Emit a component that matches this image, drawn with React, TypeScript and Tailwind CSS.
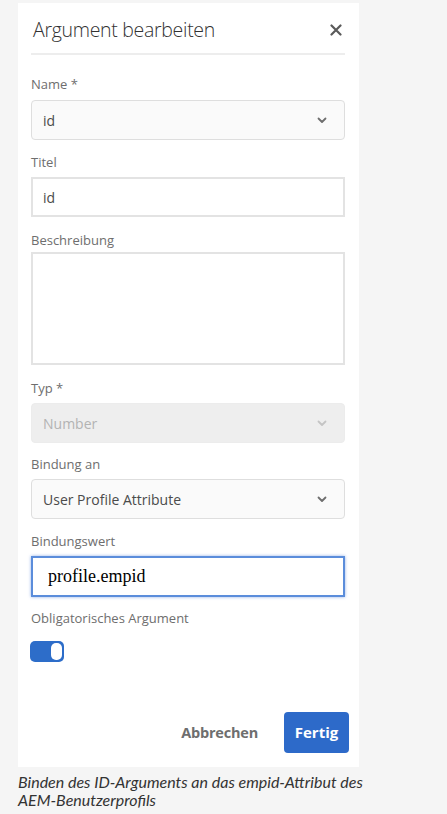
import React from "react";

const Chevron = ({ color = "#6e6e6e" }: { color?: string }) => (
  <svg width="10" height="7" viewBox="0 0 10 7" fill="none">
    <path d="M1.5 1.5 L5 5 L8.5 1.5" stroke={color} strokeWidth="1.8" strokeLinecap="round" strokeLinejoin="round" />
  </svg>
);

const Label = ({ children, className = "" }: { children: React.ReactNode; className?: string }) => (
  <div className={"h-[16px] text-[13px] leading-[16px] text-[#6e6e6e] " + className}>{children}</div>
);

const Select = ({ value, disabled = false, className = "" }: { value: string; disabled?: boolean; className?: string }) => (
  <div
    className={
      "flex h-[40px] w-[314px] items-center justify-between rounded-[4px] border-[1.5px] pl-[11px] pr-[17px] text-[14px] " +
      (disabled
        ? "border-[#ececec] bg-[#eeeeee] text-[#b3b3b3] "
        : "border-[#dedede] bg-[#fafafa] text-[#4b4b4b] ") +
      className
    }
  >
    <span>{value}</span>
    <Chevron color={disabled ? "#c4c4c4" : "#6e6e6e"} />
  </div>
);

export default function App() {
  return (
    <div className="min-h-[814px] w-[447px] bg-[#f5f5f5] pl-[18px] pt-[3px]" style={{ fontFamily: "'Open Sans', 'Noto Sans', sans-serif" }}>
      <div className="h-[764px] w-[341px] bg-white pl-[13px]">
        <div className="flex h-[50px] w-[314px] items-end justify-between pb-[10px] pl-[2px]">
          <div className="text-[19.5px] font-light leading-[26px] tracking-[-0.3px] text-[#323232]">Argument bearbeiten</div>
          <svg width="12" height="12" viewBox="0 0 12 12" className="mb-[7px] mr-[3px]">
            <path d="M1.5 1.5 L10.5 10.5 M10.5 1.5 L1.5 10.5" stroke="#5a5a5a" strokeWidth="2.2" strokeLinecap="round" />
          </svg>
        </div>
        <div className="h-[2px] w-[314px] bg-[#ededed]" />

        <Label className="mt-[21px]">Name *</Label>
        <Select value="id" className="mt-[8px]" />

        <Label className="mt-[14px]">Titel</Label>
        <div className="mt-[7px] flex h-[40px] w-[314px] items-center border-2 border-[#e3e3e3] bg-white pl-[10px] text-[14px] text-[#4b4b4b]">id</div>

        <Label className="mt-[15px]">Beschreibung</Label>
        <div className="mt-[4px] h-[113px] w-[314px] border-2 border-[#e3e3e3] bg-white" />

        <Label className="mt-[15px]">Typ *</Label>
        <Select value="Number" disabled className="mt-[7px]" />

        <Label className="mt-[13px]">Bindung an</Label>
        <Select value="User Profile Attribute" className="mt-[7px]" />

        <Label className="mt-[14px]">Bindungswert</Label>
        <div
          className="mt-[7px] flex h-[41px] w-[314px] items-center border-2 border-[#5b8ddb] bg-white pl-[15px] text-[18px] text-black shadow-[0_0_3px_rgba(75,125,215,0.6)]"
          style={{ fontFamily: "'Liberation Serif', 'Times New Roman', serif" }}
        >
          profile.empid
        </div>

        <Label className="mt-[13px]">Obligatorisches Argument</Label>
        <div className="ml-[-1px] mt-[15px] flex h-[21px] w-[34px] items-stretch justify-end rounded-[5px] bg-[#2d6dc9] p-[2px]">
          <div className="w-[11px] rounded-[5px] bg-white" />
        </div>

        <div className="mt-[50px] flex w-[318px] items-center justify-end">
          <span className="mr-[26px] text-[14.5px] font-bold tracking-[-0.2px] text-[#6e6e6e]">Abbrechen</span>
          <div className="flex h-[41px] w-[65px] items-center justify-center rounded-[4px] bg-[#2d6ac9] text-[15px] font-bold text-white">
            Fertig
          </div>
        </div>
      </div>
      <div className="mt-[6px] text-[16px] italic leading-[18px] text-[#333]" style={{ fontFamily: "Lato, 'Open Sans', sans-serif" }}>
        Binden des ID-Arguments an das empid-Attribut des
        <br />
        AEM-Benutzerprofils
      </div>
    </div>
  );
}
